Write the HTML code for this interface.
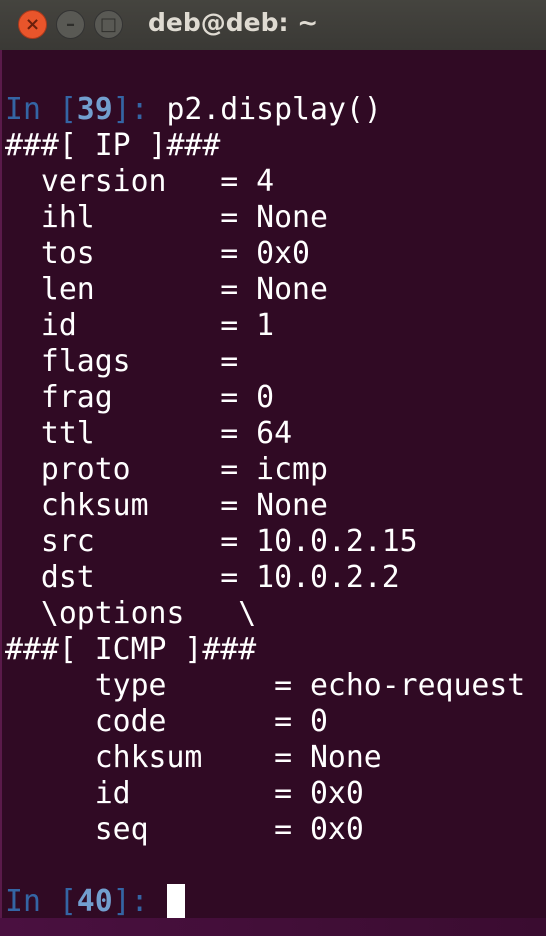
<html><head><style>
body{margin:0;width:546px;height:936px;background:#300a24;overflow:hidden;position:relative;font-family:"DejaVu Sans Mono","Liberation Mono",monospace}
.tb{position:absolute;left:0;top:0;width:546px;height:50px;background:linear-gradient(#45443f,#3a3935);}
.btn{position:absolute;top:10px;width:29px;height:29px;border-radius:50%;background:#595954;border:1px solid #333;box-sizing:border-box;color:#2e2e2b;font:bold 18px "DejaVu Sans",sans-serif;text-align:center;line-height:27px}
.title{position:absolute;left:148px;top:8px;color:#dfdbd2;font:bold 25px "DejaVu Sans","Liberation Sans",sans-serif}
pre{position:absolute;left:5px;top:92px;margin:0;font-size:29.8px;line-height:36px;color:#fff;font-family:inherit}
.b{color:#3465a4}.bb{color:#729fcf;font-weight:bold}
.cur{display:inline-block;width:18px;height:34px;background:#fff;vertical-align:-7px}
.bot{position:absolute;left:0;top:918px;width:546px;height:18px;background:linear-gradient(90deg,#4a1040,#3a0c30)}
.edge{position:absolute;left:0;top:50px;width:2px;height:886px;background:#5a1a4a}
</style></head><body>
<div class="tb"></div>
<div class="btn" style="left:18px;background:#e9552b;border-color:#a8391c;color:#6b1f0c">×</div>
<div class="btn" style="left:56px">–</div>
<div class="btn" style="left:94px">□</div>
<div class="title">deb@deb: ~</div>
<div class="edge"></div>
<pre><span class="b">In [</span><span class="bb">39</span><span class="b">]:</span> p2.display()
###[ IP ]###
  version   = 4
  ihl       = None
  tos       = 0x0
  len       = None
  id        = 1
  flags     = 
  frag      = 0
  ttl       = 64
  proto     = icmp
  chksum    = None
  src       = 10.0.2.15
  dst       = 10.0.2.2
  \options   \
###[ ICMP ]###
     type      = echo-request
     code      = 0
     chksum    = None
     id        = 0x0
     seq       = 0x0

<span class="b">In [</span><span class="bb">40</span><span class="b">]:</span> <span class="cur"></span></pre>
<div class="bot"></div>
</body></html>
